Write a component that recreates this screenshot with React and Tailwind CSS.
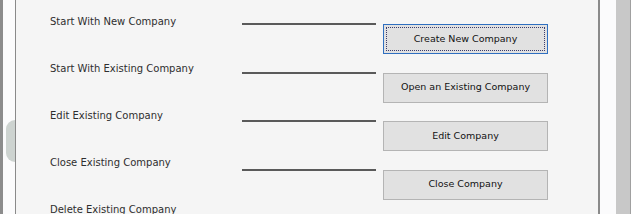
import React from "react";

const labels = [
  "Start With New Company",
  "Start With Existing Company",
  "Edit Existing Company",
  "Close Existing Company",
  "Delete Existing Company",
];

const buttons = [
  { text: "Create New Company", focused: true },
  { text: "Open an Existing Company" },
  { text: "Edit Company" },
  { text: "Close Company" },
];

const App = () => {
  return (
    <div
      className="flex h-[214px] w-[631px] overflow-hidden bg-[#f5f5f5]"
      style={{ fontFamily: '"DejaVu Sans", Verdana, sans-serif' }}
    >
      {/* left window edge */}
      <div className="w-[3px] shrink-0 bg-[#8c8c8c]" />
      <div className="flex w-[12px] shrink-0 flex-col bg-[#fbfbfc]">
        <div className="mt-[120px] ml-[3px] h-[42px] w-[9px] rounded-l-full bg-[#cdd3d0]" />
      </div>
      <div className="w-px shrink-0 bg-[#8a8a8a]" />

      {/* form panel */}
      <div className="flex flex-1 bg-[#f5f5f5]">
        {/* labels */}
        <div className="ml-[34px] flex w-[192px] flex-col gap-[33px] pt-[15px] text-[10px] leading-[14px] text-[#2e2e2e]">
          {labels.map((l, i) => (
            <div key={i} className="whitespace-nowrap">
              {l}
            </div>
          ))}
        </div>

        {/* separators */}
        <div className="flex w-[134px] flex-col gap-[46.5px] pt-[23px]">
          {buttons.map((_, i) => (
            <div key={i} className="h-[2px] bg-[#5a5a5a]" />
          ))}
        </div>

        {/* buttons */}
        <div className="ml-[7px] flex w-[165px] flex-col gap-[18.5px] pt-[24px]">
          {buttons.map((b, i) => (
            <button
              key={i}
              className={
                b.focused
                  ? "flex h-[30px] items-center justify-center border border-[#2f6fc0] bg-[#e1e1e1] p-[2px] text-[9.5px] text-[#111]"
                  : "flex h-[30px] items-center justify-center border border-[#b4b4b4] bg-[#e1e1e1] text-[9.5px] text-[#111]"
              }
            >
              {b.focused ? (
                <span className="flex h-full w-full items-center justify-center border border-dotted border-[#3b3b6b]">
                  {b.text}
                </span>
              ) : (
                b.text
              )}
            </button>
          ))}
        </div>
      </div>

      {/* right window edge */}
      <div className="w-[2px] shrink-0 bg-[#8a8a8a]" />
      <div className="w-[16px] shrink-0 bg-[#fbfbfc]" />
      <div className="w-[14px] shrink-0 bg-[#c8c8c8]" />
      <div className="w-px shrink-0 bg-[#a0a0a0]" />
    </div>
  );
};

export default App;
